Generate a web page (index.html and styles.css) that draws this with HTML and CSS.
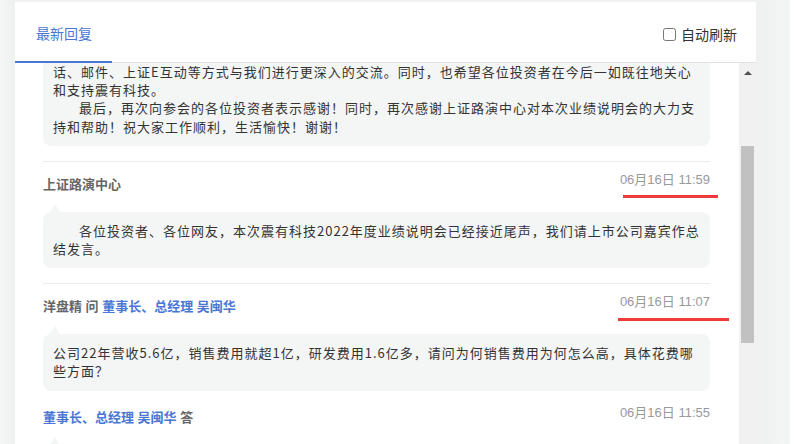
FILE: index.html
```html
<!DOCTYPE html>
<html>
<head>
  <meta charset="utf-8">
  <title>最新回复</title>
  <link rel="stylesheet" href="styles.css">
</head>
<body>
  <div class="page">
    <div class="gutter"></div>
    <div class="panel">
      <div class="panel-head">
        <a class="tab active" href="#latest">最新回复</a>
        <label class="auto-refresh"><input type="checkbox"> 自动刷新</label>
      </div>
      <div class="panel-body">
        <div class="feed" id="latest">

          <!-- scrolled: top of this bubble is above the fold -->
          <div class="item">
            <div class="bubble bubble-cut">
              <p>话、邮件、上证E互动等方式与我们进行更深入的交流。同时，也希望各位投资者在今后一如既往地关心和支持震有科技。</p>
              <p class="indent">最后，再次向参会的各位投资者表示感谢！同时，再次感谢上证路演中心对本次业绩说明会的大力支持和帮助！祝大家工作顺利，生活愉快！谢谢！</p>
            </div>
          </div>

          <div class="item">
            <div class="meta">
              <span class="who">上证路演中心</span>
              <span class="time">06月16日 11:59</span>
            </div>
            <div class="bubble">
              <p class="indent">各位投资者、各位网友，本次震有科技2022年度业绩说明会已经接近尾声，我们请上市公司嘉宾作总结发言。</p>
            </div>
          </div>

          <div class="item">
            <div class="meta">
              <span class="who">洋盘精 问 <a href="#">董事长、总经理 吴闽华</a></span>
              <span class="time">06月16日 11:07</span>
            </div>
            <div class="bubble">
              <p>公司22年营收5.6亿，销售费用就超1亿，研发费用1.6亿多，请问为何销售费用为何怎么高，具体花费哪些方面？</p>
            </div>
            <div class="meta meta-answer">
              <span class="who"><a href="#">董事长、总经理 吴闽华</a> 答</span>
              <span class="time">06月16日 11:55</span>
            </div>
            <div class="bubble">
              <p>&nbsp;</p>
            </div>
          </div>

        </div>
        <div class="scrollbar">
          <span class="arrow"></span>
          <span class="thumb"></span>
        </div>
      </div>
    </div>
    <div class="side"></div>
  </div>

  <span class="mark mark-1"></span>
  <span class="mark mark-2"></span>
</body>
</html>
```

FILE: styles.css
```css
body {
    margin: 0;
    background: #fff;
    font: 13px "Liberation Sans", "Noto Sans CJK SC", sans-serif;
    color: #333;
}

a {
    text-decoration: none;
    color: #4a77d6;
}

p {
    margin: 0;
}

.page {
    display: flex;
    height: 444px;
    overflow: hidden;
}

.gutter {
    width: 15px;
    background: linear-gradient(to right, #f4f5f5, #eff0f0);
}

.side {
    width: 34px;
    background: linear-gradient(to right, #eff0f0, #f4f5f5);
}

.panel {
    width: 741px;
    margin-top: 2px;
    background: #fff;
    display: flex;
    flex-direction: column;
    box-shadow: 0 -2px 0 #f0f1f1;
}

.panel-head {
    height: 60px;
    border-bottom: 1px solid #e2e2e2;
    display: flex;
    align-items: stretch;
    justify-content: space-between;
    padding-right: 19px;
}

.tab {
    display: flex;
    align-items: center;
    padding: 2px 20px 0 21px;
    font-size: 14px;
    margin-bottom: -1px;
    border-bottom: 2px solid transparent;
}

.tab.active {
    border-bottom-color: #4a77d6;
}

.auto-refresh {
    display: flex;
    align-items: center;
    padding-top: 4px;
    font-size: 14px;
    color: #333;
}

.auto-refresh input {
    width: 13px;
    height: 13px;
    margin: 0 5px 0 0;
}

.panel-body {
    flex: 1;
    display: flex;
    overflow: hidden;
}

.feed {
    flex: 1;
    padding: 0 29px 0 28px;
    overflow: hidden;
}

.item {
    padding-bottom: 15px;
    border-bottom: 1px solid #ebebeb;
}

.meta {
    display: flex;
    justify-content: space-between;
    align-items: flex-start;
    padding-top: 8px;
    line-height: 20px;
}

.meta-answer {
    padding-top: 12px;
}

.who {
    margin-top: 5px;
    font-weight: bold;
    color: #666;
}

.time {
    color: #999;
}

.bubble {
    position: relative;
    margin-top: 17px;
    padding: 10px 8px 10px 10px;
    background: #f4f5f5;
    border-radius: 8px;
    font-family: "Noto Sans CJK SC", sans-serif;
    line-height: 18.2px;
    letter-spacing: 1px;
    color: #333;
}

.bubble:before {
    content: "";
    position: absolute;
    left: 7px;
    top: -8px;
    border-left: 5px solid transparent;
    border-right: 5px solid transparent;
    border-bottom: 8px solid #f4f5f5;
}

.bubble-cut {
    margin-top: 0;
    padding-top: 0;
    border-radius: 0 0 8px 8px;
}

.bubble-cut:before {
    display: none;
}

.indent {
    text-indent: 2em;
}

.scrollbar {
    width: 17px;
    background: #f1f1f1;
    display: flex;
    flex-direction: column;
    align-items: center;
}

.arrow {
    margin-top: 8px;
    border-left: 4px solid transparent;
    border-right: 4px solid transparent;
    border-bottom: 4px solid #505050;
}

.thumb {
    width: 13px;
    height: 197px;
    margin-top: 71px;
    background: #c1c1c1;
}

/* red marks drawn over the timestamps */
.mark {
    position: absolute;
    height: 3px;
    background: #f03b3b;
}

.mark-1 {
    left: 623px;
    top: 195px;
    width: 95px;
}

.mark-2 {
    left: 618px;
    top: 318px;
    width: 111px;
}
```
